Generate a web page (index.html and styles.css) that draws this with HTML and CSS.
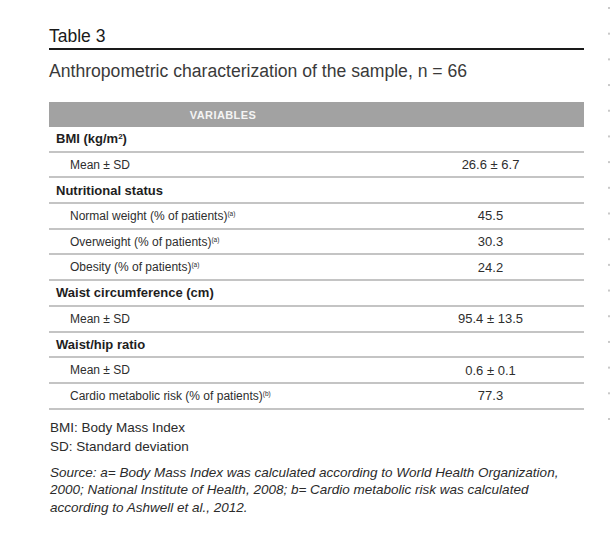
FILE: index.html
```html
<!DOCTYPE html>
<html lang="en">
<head>
<meta charset="utf-8">
<title>Table 3</title>
<link rel="stylesheet" href="styles.css">
</head>
<body>
<div class="page">
  <main class="content">
    <h1 class="title">Table 3</h1>
    <p class="subtitle">Anthropometric characterization of the sample, n = 66</p>
    <table class="data">
      <thead>
        <tr><th class="col-var">VARIABLES</th><th class="col-val"></th></tr>
      </thead>
      <tbody>
        <tr class="group"><td>BMI (kg/m<sup class="sq">2</sup>)</td><td></td></tr>
        <tr><td class="ind">Mean ± SD</td><td class="val">26.6 ± 6.7</td></tr>
        <tr class="group"><td>Nutritional status</td><td></td></tr>
        <tr><td class="ind">Normal weight (% of patients)<sup class="ref">(a)</sup></td><td class="val">45.5</td></tr>
        <tr><td class="ind">Overweight (% of patients)<sup class="ref">(a)</sup></td><td class="val">30.3</td></tr>
        <tr><td class="ind">Obesity (% of patients)<sup class="ref">(a)</sup></td><td class="val">24.2</td></tr>
        <tr class="group"><td>Waist circumference (cm)</td><td></td></tr>
        <tr><td class="ind">Mean ± SD</td><td class="val">95.4 ± 13.5</td></tr>
        <tr class="group"><td>Waist/hip ratio</td><td></td></tr>
        <tr><td class="ind">Mean ± SD</td><td class="val">0.6 ± 0.1</td></tr>
        <tr><td class="ind">Cardio metabolic risk (% of patients)<sup class="ref">(b)</sup></td><td class="val">77.3</td></tr>
      </tbody>
    </table>
    <div class="abbr">
      <p>BMI: Body Mass Index</p>
      <p>SD: Standard deviation</p>
    </div>
    <p class="source">Source: a= Body Mass Index was calculated according to World Health Organization, 2000; National Institute of Health, 2008; b= Cardio metabolic risk was calculated according to Ashwell et al., 2012.</p>
  </main>
  <div class="dots" aria-hidden="true"></div>
</div>
</body>
</html>
```

FILE: styles.css
```css
html, body {
  margin: 0;
  padding: 0;
  background: #ffffff;
}

body {
  font-family: "Liberation Sans", Arial, sans-serif;
  color: #2b2b2b;
}

.page {
  display: flex;
  align-items: flex-start;
  padding-left: 49px;
  gap: 24px;
}

.content {
  width: 535px;
  padding-top: 26px;
}

.title {
  margin: 0;
  font-size: 17.5px;
  font-weight: normal;
  line-height: 20px;
  color: #1a1a1a;
  padding-bottom: 2px;
  border-bottom: 2px solid #1a1a1a;
}

.subtitle {
  margin: 0;
  padding-top: 11px;
  font-size: 17.6px;
  line-height: 20px;
  color: #3a3a3a;
}

.data {
  margin-top: 21px;
  width: 535px;
  border-collapse: collapse;
  table-layout: fixed;
}

.data th {
  background: #a2a2a2;
  color: #f4f4f4;
  font-size: 11px;
  font-weight: bold;
  letter-spacing: 0.4px;
  height: 25px;
  padding: 0;
  text-align: center;
}

.col-var { width: 348px; }
.col-val { width: 187px; }

.data td {
  height: 23.7px;
  padding: 0;
  border-bottom: 2px solid #c4c4c4;
  font-size: 12px;
  color: #2e2e2e;
  vertical-align: middle;
}

.data tr.group td {
  font-weight: bold;
  font-size: 13px;
  padding-left: 7px;
  color: #1e1e1e;
}

.data td.ind {
  padding-left: 21px;
}

.data td.val {
  text-align: center;
  font-size: 13px;
  padding-left: 0;
}

.ref {
  font-size: 6.5px;
  vertical-align: 4px;
  line-height: 0;
}

.sq {
  font-size: 8px;
  vertical-align: 4px;
  line-height: 0;
}

.abbr {
  margin-top: 8px;
  font-size: 13.5px;
  line-height: 19px;
  color: #2b2b2b;
}

.abbr p {
  margin: 0;
  padding-left: 1px;
}

.source {
  margin: 8px 0 0;
  padding-left: 1px;
  font-size: 13.5px;
  font-style: italic;
  line-height: 17.5px;
  color: #2b2b2b;
  width: 520px;
}

.dots {
  width: 2px;
  height: 414px;
  margin-top: 7px;
  background-image: linear-gradient(to bottom, #c9c9c9 0, #c9c9c9 1.5px, transparent 1.5px);
  background-size: 2px 25.7px;
  background-repeat: repeat-y;
}
```
